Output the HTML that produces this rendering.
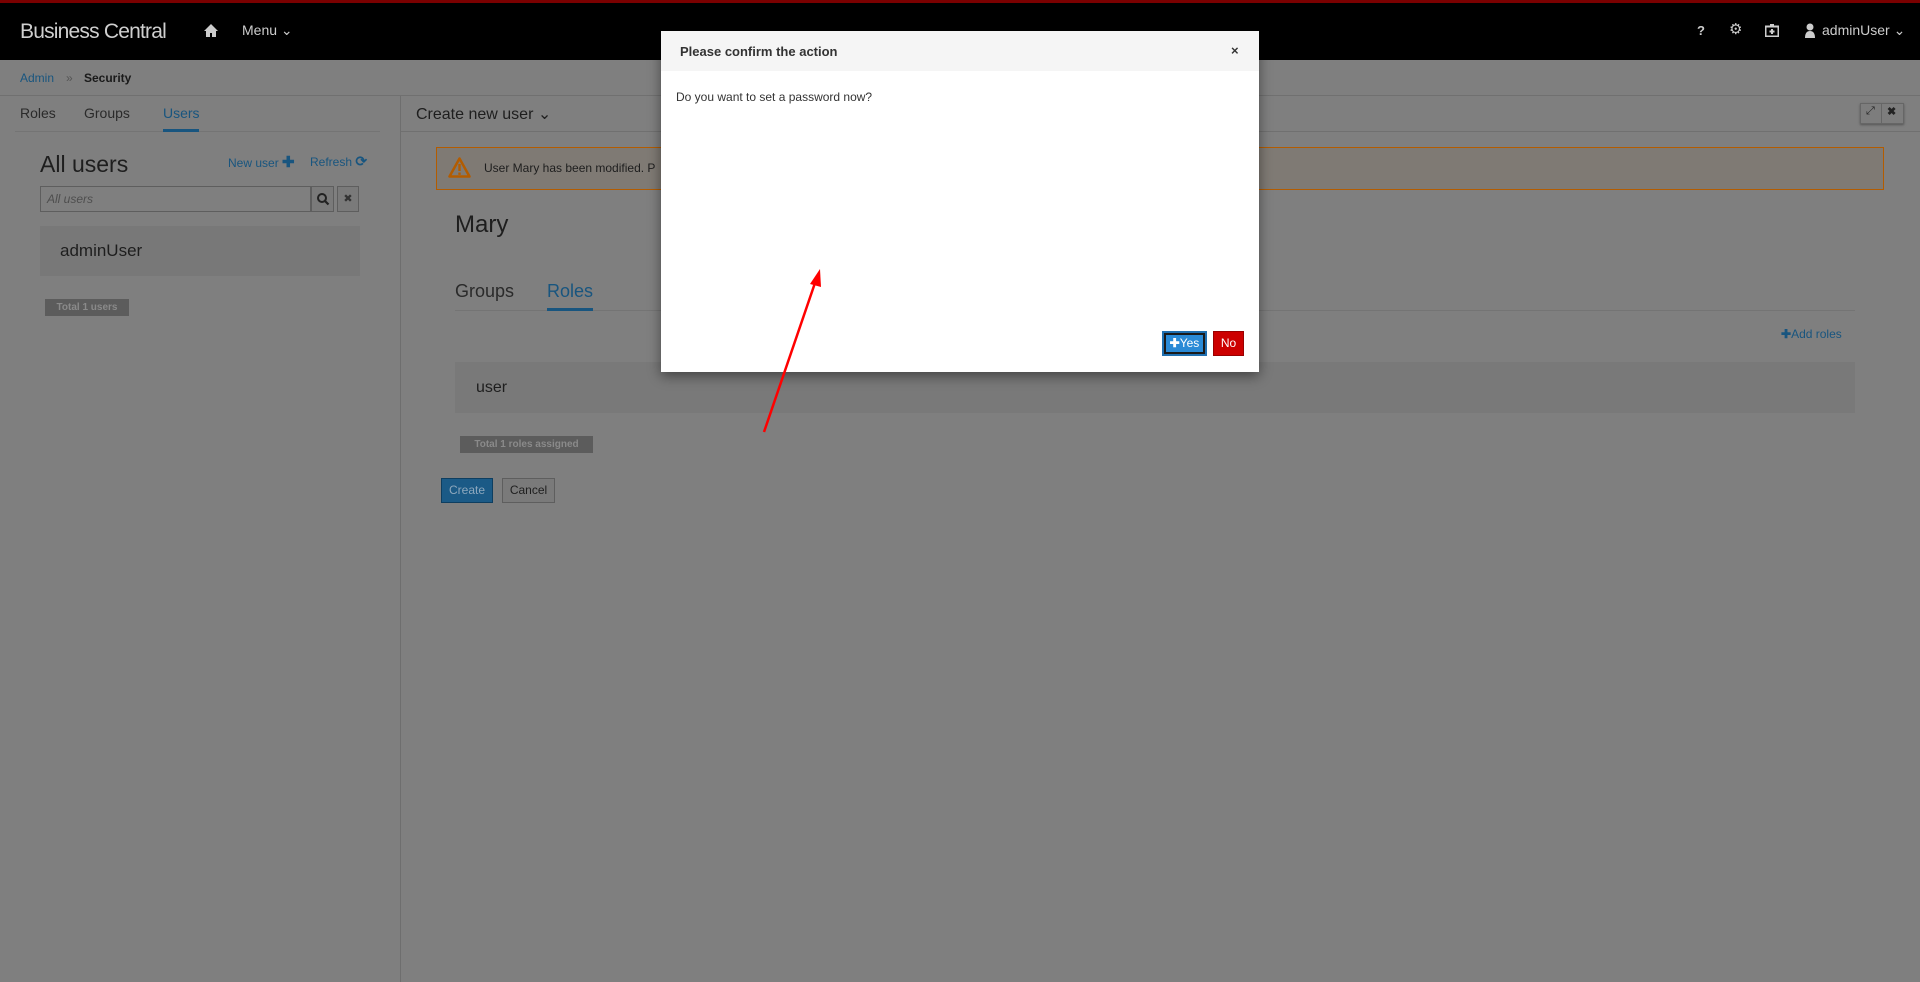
<!DOCTYPE html>
<html><head><meta charset="utf-8"><style>
*{box-sizing:border-box;margin:0;padding:0}
body{width:1920px;height:982px;overflow:hidden;background:#7f7f7f;font-family:"Liberation Sans",sans-serif;color:#1a1a1a;position:relative}
.a{position:absolute;white-space:nowrap}
.blue{color:#18557f}
</style></head><body>
<div class="a" style="left:0;top:0;width:1920px;height:3px;background:#7a0000"></div>
<div class="a" style="left:0;top:3px;width:1920px;height:57px;background:#000"></div>
<div class="a" style="left:20px;top:20px;font-size:21px;color:#cfcfcf;letter-spacing:-0.8px">Business Central</div>
<svg class="a" style="left:204px;top:24px" width="14" height="13" viewBox="0 0 14 13"><path d="M7 0L0 7h2v6h4V9h2v4h4V7h2z" fill="#ccc"/></svg>
<div class="a" style="left:242px;top:22px;font-size:14px;color:#ccc">Menu ⌄</div>
<div class="a" style="left:1697px;top:23px;font-size:13px;color:#ccc;font-weight:bold">?</div>
<div class="a" style="left:1729px;top:20px;font-size:15px;color:#ccc">⚙</div>
<svg class="a" style="left:1765px;top:24px" width="14" height="13" viewBox="0 0 14 13"><rect x="0.5" y="2.5" width="13" height="10" fill="none" stroke="#ccc" stroke-width="2"/><rect x="5" y="0" width="4" height="3" fill="#ccc"/><rect x="6" y="5" width="2" height="5" fill="#ccc"/><rect x="4.5" y="6.5" width="5" height="2" fill="#ccc"/></svg>
<svg class="a" style="left:1804px;top:23px" width="12" height="15" viewBox="0 0 12 15"><circle cx="6" cy="4" r="3.5" fill="#ccc"/><path d="M1 15c0-5 2-7 5-7s5 2 5 7z" fill="#ccc"/></svg>
<div class="a" style="left:1822px;top:22px;font-size:14px;color:#ccc">adminUser ⌄</div>

<div class="a" style="left:0;top:95px;width:1920px;height:1px;background:#707070"></div>
<div class="a blue" style="left:20px;top:71px;font-size:12px">Admin</div>
<div class="a" style="left:66px;top:71px;font-size:12px;color:#555">»</div>
<div class="a" style="left:84px;top:71px;font-size:12px;font-weight:bold;color:#1a1a1a">Security</div>

<div class="a" style="left:400px;top:96px;width:1px;height:886px;background:#6e6e6e"></div>
<div class="a" style="left:20px;top:105px;font-size:14px;color:#2a2a2a">Roles</div>
<div class="a" style="left:84px;top:105px;font-size:14px;color:#2a2a2a">Groups</div>
<div class="a blue" style="left:163px;top:105px;font-size:14px">Users</div>
<div class="a" style="left:15px;top:131px;width:365px;height:1px;background:#747474"></div>
<div class="a" style="left:163px;top:129px;width:36px;height:3px;background:#18557f"></div>

<div class="a" style="left:40px;top:151px;font-size:23px;color:#1e1e1e">All users</div>
<div class="a blue" style="left:228px;top:153px;font-size:12px">New user <b style="font-size:15px">✚</b></div>
<div class="a blue" style="left:310px;top:153px;font-size:12px">Refresh <b style="font-size:14px">⟳</b></div>
<div class="a" style="left:40px;top:186px;width:271px;height:26px;border:1px solid #5e5e5e;background:#7f7f7f"></div>
<div class="a" style="left:47px;top:192px;font-size:12px;font-style:italic;color:#4e4e4e">All users</div>
<div class="a" style="left:311px;top:186px;width:23px;height:26px;border:1px solid #5e5e5e;background:#7a7a7a"></div>
<svg class="a" style="left:316px;top:192px" width="14" height="14" viewBox="0 0 14 14"><circle cx="6" cy="6" r="4" fill="none" stroke="#222" stroke-width="2"/><line x1="9" y1="9" x2="12.5" y2="12.5" stroke="#222" stroke-width="2.2"/></svg>
<div class="a" style="left:337px;top:186px;width:22px;height:26px;border:1px solid #5e5e5e;background:#7a7a7a;font-size:11px;text-align:center;line-height:24px;color:#333">✖</div>
<div class="a" style="left:40px;top:226px;width:320px;height:50px;background:#787878"></div>
<div class="a" style="left:60px;top:241px;font-size:17px;color:#1e1e1e">adminUser</div>
<div class="a" style="left:45px;top:299px;width:84px;height:17px;background:#5c5c5c;color:#8a8a8a;font-size:10px;font-weight:bold;text-align:center;line-height:17px">Total 1 users</div>

<div class="a" style="left:416px;top:104px;font-size:16px;color:#1e1e1e">Create new user ⌄</div>
<div class="a" style="left:401px;top:131px;width:1519px;height:1px;background:#707070"></div>
<div class="a" style="left:1860px;top:103px;width:44px;height:21px;border:1px solid #666;background:#7d7d7d;box-shadow:0 1px 2px #555"></div>
<div class="a" style="left:1881px;top:103px;width:1px;height:21px;background:#666"></div>
<div class="a" style="left:1866px;top:105px;font-size:11px;color:#222">⤢</div>
<div class="a" style="left:1887px;top:105px;font-size:11px;color:#222;font-weight:bold">✖</div>

<div class="a" style="left:436px;top:147px;width:1448px;height:43px;border:1px solid #b35c00;background:#7f7a74"></div>
<svg class="a" style="left:448px;top:157px" width="23" height="21" viewBox="0 0 23 21"><path d="M11.5 1.5L1.5 19.5h20z" fill="none" stroke="#b35c00" stroke-width="2.5" stroke-linejoin="round"/><rect x="10.3" y="7" width="2.4" height="7" fill="#b35c00"/><rect x="10.3" y="15.5" width="2.4" height="2.4" fill="#b35c00"/></svg>
<div class="a" style="left:484px;top:161px;font-size:12px;color:#1e1e1e">User Mary has been modified. P</div>

<div class="a" style="left:455px;top:211px;font-size:24px;color:#1e1e1e">Mary</div>
<div class="a" style="left:455px;top:281px;font-size:18px;color:#2a2a2a">Groups</div>
<div class="a blue" style="left:547px;top:281px;font-size:18px">Roles</div>
<div class="a" style="left:455px;top:310px;width:1400px;height:1px;background:#747474"></div>
<div class="a" style="left:547px;top:308px;width:46px;height:3px;background:#18557f"></div>
<div class="a blue" style="left:1781px;top:327px;font-size:12px"><b>✚</b>Add roles</div>
<div class="a" style="left:455px;top:362px;width:1400px;height:51px;background:#797979"></div>
<div class="a" style="left:476px;top:379px;font-size:16px;color:#1e1e1e">user</div>
<div class="a" style="left:460px;top:436px;width:133px;height:17px;background:#5c5c5c;color:#8a8a8a;font-size:10px;font-weight:bold;text-align:center;line-height:17px">Total 1 roles assigned</div>
<div class="a" style="left:441px;top:478px;width:52px;height:25px;background:#1b5a86;border:1px solid #0e3e60;color:#8ea8bd;font-size:12px;text-align:center;line-height:23px">Create</div>
<div class="a" style="left:502px;top:478px;width:53px;height:25px;background:#7a7a7a;border:1px solid #5e5e5e;color:#1e1e1e;font-size:12px;text-align:center;line-height:23px">Cancel</div>

<div class="a" style="left:661px;top:31px;width:598px;height:341px;background:#fff;box-shadow:0 4px 12px rgba(0,0,0,0.45)"></div>
<div class="a" style="left:661px;top:31px;width:598px;height:40px;background:#f5f5f5"></div>
<div class="a" style="left:680px;top:44px;font-size:13px;font-weight:bold;color:#333">Please confirm the action</div>
<div class="a" style="left:1231px;top:43px;font-size:13px;color:#333;font-weight:bold">×</div>
<div class="a" style="left:676px;top:90px;font-size:12px;color:#333">Do you want to set a password now?</div>
<div class="a" style="left:1162px;top:331px;width:45px;height:25px;border:2px solid #1f6fb0;background:#1a1a1a;padding:2px"><div style="width:100%;height:100%;background:#2a8ad6;color:#fff;font-size:12px;text-align:center;line-height:17px"><b>✚</b>Yes</div></div>
<div class="a" style="left:1213px;top:331px;width:31px;height:25px;background:#c00;border:1px solid #900;color:#fff;font-size:12px;text-align:center;line-height:23px">No</div>

<svg class="a" style="left:0;top:0" width="1920" height="982"><line x1="764" y1="432" x2="816" y2="280" stroke="#f00" stroke-width="2.5"/><path d="M820 269L810 284L821 287z" fill="#f00"/></svg>
</body></html>
